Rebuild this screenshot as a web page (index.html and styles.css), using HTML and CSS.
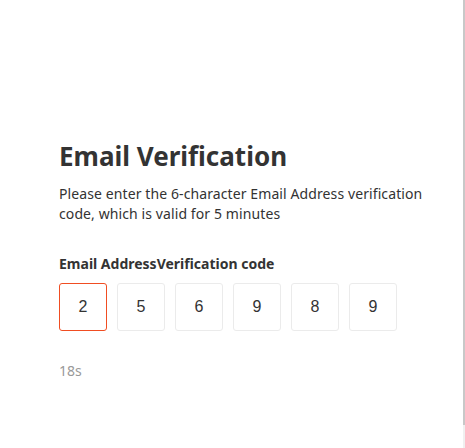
FILE: index.html
```html
<!DOCTYPE html>
<html>
<head>
<meta charset="utf-8">
<link rel="stylesheet" href="styles.css">
</head>
<body>
<div class="frame">
  <div class="panel">
    <h1 class="title">Email Verification</h1>
    <p class="desc">Please enter the 6-character Email Address verification code, which is valid for 5 minutes</p>
    <div class="label">Email AddressVerification code</div>
    <div class="codes">
      <div class="cell active">2</div>
      <div class="cell">5</div>
      <div class="cell">6</div>
      <div class="cell">9</div>
      <div class="cell">8</div>
      <div class="cell">9</div>
    </div>
    <div class="timer">18s</div>
  </div>
  <div class="edge"><div class="thumb"></div></div>
</div>
</body>
</html>
```
FILE: styles.css
```css
html, body {
  margin: 0;
  padding: 0;
  background: #fff;
}
.frame {
  display: flex;
  width: 465px;
  height: 448px;
}
.panel {
  flex: 1;
  padding: 138px 0 0 59px;
  font-family: "Noto Sans", "Open Sans", sans-serif;
  color: #333;
}
.title {
  margin: 0;
  font-size: 26px;
  font-weight: 700;
  line-height: 36px;
  color: #333;
}
.desc {
  margin: 10px 0 0;
  font-size: 14px;
  line-height: 20px;
  width: 375px;
  letter-spacing: 0.1px;
}
.label {
  margin-top: 30px;
  font-size: 14px;
  font-weight: 700;
  line-height: 20px;
}
.codes {
  display: flex;
  gap: 10px;
  margin-top: 9px;
}
.cell {
  box-sizing: border-box;
  width: 48px;
  height: 48px;
  border: 1px solid #ebebeb;
  border-radius: 3px;
  display: flex;
  align-items: center;
  justify-content: center;
  font-family: "Liberation Sans", Arial, sans-serif;
  font-size: 16px;
  color: #333;
}
.cell.active {
  border-color: #f04d22;
}
.timer {
  margin-top: 30px;
  font-size: 14px;
  line-height: 20px;
  color: #999;
}
.edge {
  width: 2px;
  height: 448px;
  background: #f0f0f0;
}
.thumb {
  height: 425px;
  background: #c8c8c8;
}
```
